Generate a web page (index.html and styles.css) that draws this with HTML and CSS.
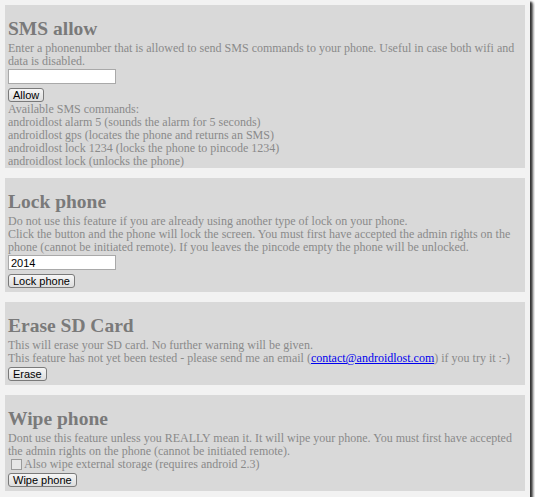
FILE: index.html
```html
<!DOCTYPE html>
<html lang="en">
<head>
    <meta charset="UTF-8">
    <title>androidlost - Controls</title>
    <link rel="stylesheet" href="styles.css">
</head>
<body>
    <div class="frame">
        <div class="panel">
            <h2>SMS allow</h2>
            <p>Enter a phonenumber that is allowed to send SMS commands to your phone. Useful in case both wifi and data is disabled.</p>
            <input type="text" class="field">
            <div class="actions"><button>Allow</button></div>
            <p>Available SMS commands:<br>
            androidlost alarm 5 (sounds the alarm for 5 seconds)<br>
            androidlost gps (locates the phone and returns an SMS)<br>
            androidlost lock 1234 (locks the phone to pincode 1234)<br>
            androidlost lock (unlocks the phone)</p>
        </div>

        <div class="panel">
            <h2>Lock phone</h2>
            <p>Do not use this feature if you are already using another type of lock on your phone.<br>
            Click the button and the phone will lock the screen. You must first have accepted the admin rights on the phone (cannot be initiated remote). If you leaves the pincode empty the phone will be unlocked.</p>
            <input type="text" class="field" value="2014">
            <div class="actions"><button>Lock phone</button></div>
        </div>

        <div class="panel">
            <h2>Erase SD Card</h2>
            <p>This will erase your SD card. No further warning will be given.<br>
            This feature has not yet been tested - please send me an email (<a href="#">contact@androidlost.com</a>) if you try it :-)</p>
            <div class="actions"><button>Erase</button></div>
        </div>

        <div class="panel">
            <h2>Wipe phone</h2>
            <p>Dont use this feature unless you REALLY mean it. It will wipe your phone. You must first have accepted the admin rights on the phone (cannot be initiated remote).</p>
            <label class="check"><span class="box"></span>Also wipe external storage (requires android 2.3)</label>
            <div class="actions"><button>Wipe phone</button></div>
        </div>
    </div>
</body>
</html>
```

FILE: styles.css
```css
body {
    margin: 0;
    padding: 0;
    background: #ffffff;
    font-family: "Liberation Serif", Georgia, serif;
}

.frame {
    width: 525px;
    height: 492px;
    padding: 5px 0 0 5px;
    background: #f2f2f2;
    box-shadow: 2px 2px 2px #333333, 3px 3px 3px #777777;
    display: flex;
    flex-direction: column;
    gap: 10px;
    overflow: hidden;
}

.panel {
    width: 517px;
    background: #d9d9d9;
    padding: 12px 0 0 3px;
    color: #8a8a8a;
}

.panel h2 {
    margin: 0 0 1px;
    font-size: 19.5px;
    line-height: 24px;
    font-weight: bold;
    color: #7a7a7a;
}

.panel p {
    margin: 0;
    font-size: 12px;
    line-height: 13px;
}

.panel a {
    color: #0000ee;
}

.field {
    display: block;
    box-sizing: border-box;
    width: 108px;
    height: 15px;
    margin: 1px 0 0;
    padding: 0 2px;
    border: 1px solid #a9a9a9;
    background: #ffffff;
    font-family: "Liberation Sans", Arial, sans-serif;
    font-size: 11px;
    color: #000000;
}

.actions {
    margin: 2px 0 4px;
    display: flex;
}

.field + .actions {
    margin-top: 4px;
}

.actions + p {
    margin-top: -3px;
}

.actions button {
    height: 14px;
    padding: 0 4px;
    border: 1px solid #7a7a7a;
    border-radius: 3px;
    background: linear-gradient(#f6f6f6, #dddddd);
    font-family: "Liberation Sans", Arial, sans-serif;
    font-size: 11px;
    line-height: 12px;
    color: #000000;
}

.check {
    display: flex;
    align-items: center;
    font-size: 12px;
    line-height: 13px;
}

.check .box {
    width: 9px;
    height: 9px;
    margin: 0 2px 0 3px;
    border: 1px solid #9a9a9a;
    background: #e6e6e6;
}
```
